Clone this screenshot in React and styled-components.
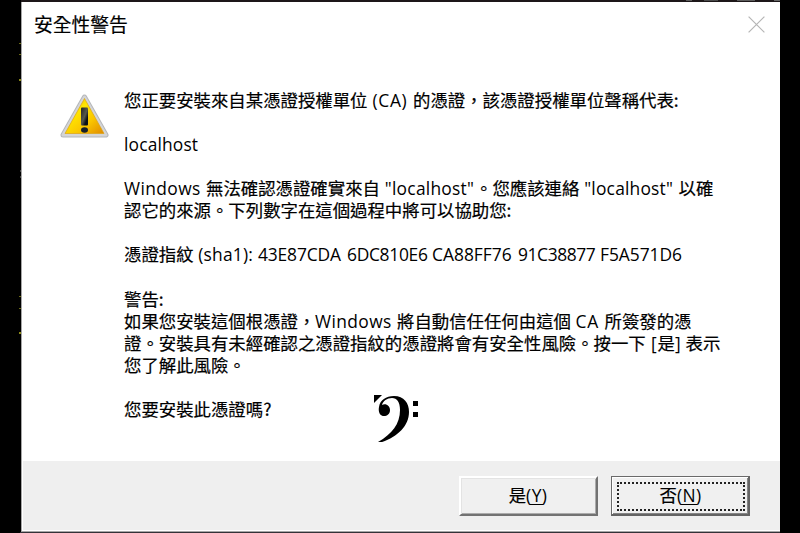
import React from "react";
import styled, { createGlobalStyle, css } from "styled-components";

const GlobalStyle = createGlobalStyle`
  * { box-sizing: border-box; }
  body { margin: 0; background: #000; overflow: hidden; }
`;

const Desktop = styled.div`
  width: 800px;
  height: 533px;
  padding: 2px 20px 1px 21px;
  background:
    linear-gradient(#5c5c5c, #5c5c5c) 686px 0 / 6px 1px no-repeat,
    linear-gradient(#4a4a4a, #4a4a4a) 704px 0 / 14px 1px no-repeat,
    linear-gradient(#5c5c5c, #5c5c5c) 737px 0 / 18px 1px no-repeat,
    linear-gradient(#666, #666) 774px 0 / 6px 1px no-repeat,
    linear-gradient(#6b6a14, #6b6a14) 19px 43px / 2px 1px no-repeat,
    linear-gradient(#6b6a14, #6b6a14) 19px 54px / 2px 1px no-repeat,
    linear-gradient(#8c8a18, #8c8a18) 19px 79px / 2px 2px no-repeat,
    linear-gradient(#444, #444) 20px 170px / 1px 2px no-repeat,
    linear-gradient(#444, #444) 20px 176px / 1px 2px no-repeat,
    linear-gradient(#6b6a14, #6b6a14) 19px 296px / 2px 1px no-repeat,
    linear-gradient(#6b6a14, #6b6a14) 19px 308px / 2px 1px no-repeat,
    linear-gradient(#8c8a18, #8c8a18) 19px 332px / 2px 2px no-repeat,
    linear-gradient(#1d1719, #1d1719) 21px 0 / 759px 2px no-repeat,
    linear-gradient(#333238, #333238) 20px 532px / 760px 1px no-repeat,
    #000;
  font-family: "Open Sans", "Noto Sans CJK TC", sans-serif;
  color: #000;
`;

const Dialog = styled.section`
  display: flex;
  flex-direction: column;
  width: 759px;
  height: 530px;
  border: solid #a6a6a6;
  border-width: 0 0 1px 1px;
  background: #fff;
`;

const TitleBar = styled.header`
  display: flex;
  justify-content: space-between;
  height: 46px;
  padding: 12px 15px 0 12px;
`;

const Title = styled.h1`
  margin: 0;
  font: 400 18.8px/20px "Noto Sans CJK TC", sans-serif;
  -webkit-text-stroke: 0.2px;
`;

const CloseIcon = styled.svg`
  width: 17px;
  height: 17px;
  margin-top: 2px;
`;

const Content = styled.main`
  display: flex;
  height: 413px;
  padding: 41px 0 0 37px;
`;

const WarningIcon = styled.svg`
  flex: none;
  width: 51px;
  height: 46px;
  margin: 4px 14px 0 0;
`;

const Message = styled.div`
  margin-top: -0.4px;
  font-size: 17.4px;
  line-height: 22.12px;
`;

const Line = styled.p`
  display: flex;
  align-items: center;
  height: 22.12px;
  margin: 0;
  white-space: pre;
`;

const Han = styled.span`
  flex: none;
  width: ${(p) => (p.$w ? `${p.$w}px` : "auto")};
  font-family: "Noto Sans CJK TC", sans-serif;
  text-spacing-trim: space-all;
  -webkit-text-stroke: 0.2px;
`;

const Latin = styled.span`
  flex: none;
  width: ${(p) => (p.$w ? `${p.$w}px` : "auto")};
  letter-spacing: ${(p) => p.$track || 0}px;
`;

const ClefIcon = styled.svg`
  width: 48px;
  height: 50px;
  margin: -6.5px 0 -21px 102px;
  align-self: flex-start;
`;

const Footer = styled.footer`
  display: flex;
  gap: 13px;
  height: 70px;
  padding: 15px 0 0 436px;
  border: solid #fff;
  border-width: 0 0 1px 1px;
  background: #efefef;
`;

const Button = styled.button`
  width: 139px;
  height: 40px;
  padding: 0;
  display: flex;
  background: #f0f0f0;
  border: 2px solid;
  border-color: #fff #727272 #727272 #fff;
  box-shadow: inset 1px 1px #e3e3e3, inset -1px -1px #ababab;
  font: 17.4px/22px "Open Sans", sans-serif;
  color: #000;
  ${(p) => p.$focused && css`
    border-color: #6a6a6a #646464 #646464 #6a6a6a;
    box-shadow: inset 1px 1px #fff, inset -1px -1px #858585;
    border-width: 1px 2px 2px 1px;
    padding: 5px 3px 3px 5px;
  `}
`;

const ButtonFace = styled.span`
  flex: 1;
  height: 100%;
  display: flex;
  align-items: center;
  justify-content: center;
  padding: 0 1px 3px 0;
  border: ${(p) => (p.$focused ? "2px dotted #222" : "0")};
`;

const AccessKey = styled.span`
  position: relative;
  letter-spacing: 0.4px;
  &::after {
    content: "";
    position: absolute;
    left: 4px;
    right: 4px;
    bottom: 1px;
    height: 1px;
    background: #000;
  }
`;

const LINES = [
  [["h", "您正要安裝來自某憑證授權單位", 243.5], ["l", " (CA)", 45.5, 0.6], ["h", "的憑證，該憑證授權單位聲稱代表:"]],
  [],
  [["l", "localhost", 0, 0.15]],
  [],
  [["l", "Windows", 82, 0.4], ["h", "無法確認憑證確實來自", 174], ["l", ' "localhost"', 95, 0.25], ["h", "。您應該連絡", 104.5], ["l", ' "localhost"', 99, 0.2], ["h", "以確"]],
  [["h", "認它的來源。下列數字在這個過程中將可以協助您:"]],
  [],
  [["h", "憑證指紋", 69.5], ["l", " (sha1):", 64.5, 0.2], ["l", "43E87CDA", 89, -0.15], ["l", "6DC810E6", 85, -0.3], ["l", "CA88FF76", 86, 0], ["l", "91C38877", 82, -0.4], ["l", "F5A571D6", 84, -0.05]],
  [],
  [["h", "警告:"]],
  [["h", "如果您安裝這個根憑證，", 191], ["l", "Windows", 82, 0.4], ["h", "將自動信任任何由這個", 173.5], ["l", " CA", 34, 0.6], ["h", "所簽發的憑"]],
  [["h", "證。安裝具有未經確認之憑證指紋的憑證將會有安全性風險。按一下", 522.5], ["l", " [", 11], ["h", "是", 17.5], ["l", "]", 10.5], ["h", "表示"]],
  [["h", "您了解此風險。"]],
  [],
  [["h", "您要安裝此憑證嗎?"]],
];

export default function App() {
  return (
    <>
      <GlobalStyle />
      <Desktop>
        <Dialog>
          <TitleBar>
            <Title>安全性警告</Title>
            <CloseIcon viewBox="0 0 17 17">
              <path d="M.6.6 16.4 16.4M16.4.6.6 16.4" stroke="#b5b5b5" strokeWidth="1.2" />
            </CloseIcon>
          </TitleBar>
          <Content>
            <WarningIcon viewBox="0 0 51 46">
              <defs>
                <linearGradient id="fill" x1="0" y1="0" x2="1" y2="1">
                  <stop offset="0" stopColor="#e8ae10" />
                  <stop offset=".35" stopColor="#ffe600" />
                  <stop offset=".65" stopColor="#fac600" />
                  <stop offset="1" stopColor="#e08a00" />
                </linearGradient>
                <linearGradient id="mark" x1="0" y1="0" x2="1" y2="1">
                  <stop offset="0" stopColor="#222" />
                  <stop offset=".5" stopColor="#56584a" />
                  <stop offset=".75" stopColor="#0b1119" />
                </linearGradient>
              </defs>
              <path d="M25.5 4 47 42H4Z" fill="#aeb0b3" stroke="#b5b7ba" strokeWidth="5" strokeLinejoin="round" />
              <path d="M25.5 4 47 42H4Z" fill="#ccc" stroke="#d4d5d7" strokeWidth="3" strokeLinejoin="round" />
              <path d="M25.5 5.5 45 40.5H6Z" fill="url(#fill)" stroke="#dca413" strokeWidth=".7" />
              <rect x="22" y="14.5" width="7" height="18" rx="1" fill="url(#mark)" />
              <ellipse cx="25.5" cy="37" rx="3.5" ry="2.7" fill="#17202a" />
            </WarningIcon>
            <Message>
              {LINES.map((runs, i) => (
                <Line key={i}>
                  {runs.map(([kind, text, w, track], j) => {
                    const Run = kind === "h" ? Han : Latin;
                    return <Run key={j} $w={w} $track={track}>{text}</Run>;
                  })}
                  {i === LINES.length - 1 && (
                    <ClefIcon viewBox="0 0 48 50">
                      <path d="M1 3H9L1 11Z" />
                      <path d="M6 15C7 8 13 4 21 4C31 4 36 11 36 20C36 35 23 46 6 51L5 50C19 42 27 32 27 18C27 10 24 6 19 6C14 6 10 9 9 13C13 11 17 14 17 18C17 22 14 24 11 24C7 24 5 20 6 15Z" />
                      <path d="M40 9h5v5h-5zM40 20h5v5h-5z" />
                    </ClefIcon>
                  )}
                </Line>
              ))}
            </Message>
          </Content>
          <Footer>
            <Button>
              <ButtonFace><Han>是</Han><AccessKey>(Y)</AccessKey></ButtonFace>
            </Button>
            <Button $focused>
              <ButtonFace $focused><Han>否</Han><AccessKey>(N)</AccessKey></ButtonFace>
            </Button>
          </Footer>
        </Dialog>
      </Desktop>
    </>
  );
}
